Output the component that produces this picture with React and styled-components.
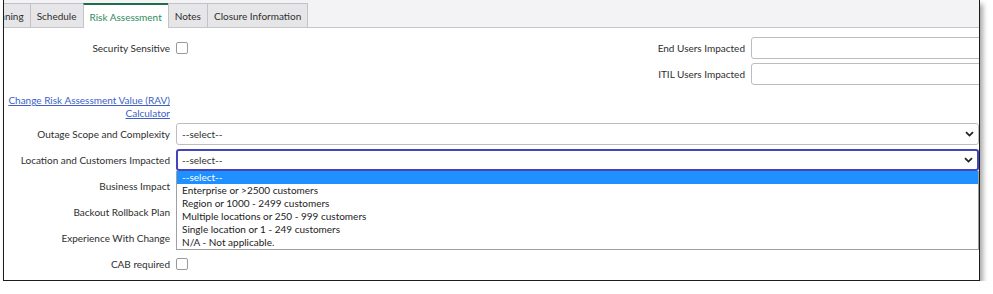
import React from 'react';
import styled, { createGlobalStyle } from 'styled-components';

const GlobalStyle = createGlobalStyle`
  html, body {
    margin: 0;
    padding: 0;
    background: #ffffff;
  }
  body {
    font-family: Lato, "Open Sans", "Liberation Sans", sans-serif;
    font-size: 10px;
    color: #2e2e2e;
  }
`

const Frame = styled.div`
  margin-left: 3px;
  width: 975px;
  height: 280px;
  border: 1px solid #1c1c1c;
  border-top: none;
  box-shadow: 3px 4px 5px rgba(0, 0, 0, 0.35);
  background: #ffffff;
  overflow: hidden;
  position: relative;
`

const TabStrip = styled.div`
  display: flex;
  align-items: flex-end;
  height: 27px;
  background: #f3f3f5;
  border-bottom: 1px solid #c6c6ca;
`

const TabList = styled.div`
  display: flex;
  margin-left: -25px;
  height: 24px;
`

const Tab = styled.div`
  display: flex;
  align-items: center;
  padding: 0 6px;
  height: 23px;
  border: 1px solid #c3c3c7;
  border-bottom: none;
  margin-right: -1px;
  background: ${p => (p.$active ? '#ffffff' : '#e6e6e8')};
  color: ${p => (p.$active ? '#2f8a5c' : '#2e2e2e')};
  border-top: ${p => (p.$active ? '2px solid #1e6e4c' : '1px solid #c3c3c7')};
  margin-bottom: ${p => (p.$active ? '-1px' : '0')};
  position: relative;
  white-space: nowrap;
`

const Form = styled.div`
  display: flex;
  flex-direction: column;
  gap: 4px;
  padding-top: 9px;
`

const Top = styled.div`
  display: flex;
`

const Half = styled.div`
  display: flex;
  flex-direction: column;
  gap: 4px;
  width: ${p => p.$width}px;
  flex-shrink: 0;
`

const Row = styled.div`
  display: flex;
  align-items: center;
  gap: 6px;
  height: 22px;
  position: relative;
`

const Label = styled.div`
  width: ${p => p.$width || 166}px;
  flex-shrink: 0;
  text-align: right;
  white-space: nowrap;
`

const LinkLabel = styled.a`
  display: block;
  width: 166px;
  text-align: right;
  color: #3d5fc6;
  text-decoration: underline;
  line-height: 13px;
  padding-top: 5px;
  height: 30px;
  box-sizing: border-box;
  white-space: nowrap;
  cursor: pointer;
`

const Checkbox = styled.span`
  display: inline-block;
  width: 10px;
  height: 10px;
  border: 1px solid #9a9a9e;
  border-radius: 2px;
  background: #ffffff;
`

const TextInput = styled.div`
  width: 260px;
  height: 20px;
  border: 1px solid #bdbdc1;
  border-radius: 3px;
  background: #ffffff;
  flex-shrink: 0;
`

const SelectBox = styled.div`
  flex: 1;
  display: flex;
  align-items: center;
  justify-content: space-between;
  height: ${p => (p.$focused ? '18px' : '20px')};
  border: ${p => (p.$focused ? '2px solid #4444be' : '1px solid #bdbdc1')};
  border-radius: 3px;
  padding: 0 4px 0 ${p => (p.$focused ? '4px' : '5px')};
  background: #ffffff;
  color: #2e2e2e;
`

const Dropdown = styled.div`
  position: absolute;
  left: 172px;
  right: 0;
  top: 22px;
  border: 1px solid #a0a0a4;
  border-top: none;
  background: #ffffff;
  z-index: 2;
`

const Option = styled.div`
  height: 13px;
  line-height: 13px;
  padding-left: 5px;
  background: ${p => (p.$selected ? '#1e90ff' : 'transparent')};
  color: ${p => (p.$selected ? '#ffffff' : '#222222')};
  white-space: nowrap;
`

const Chevron = () => (
  <svg width="9" height="6" viewBox="0 0 9 6">
    <path d="M1 1.2 L4.5 4.6 L8 1.2" fill="none" stroke="#222" strokeWidth="1.8" />
  </svg>
)

const tabs = ['Planning', 'Schedule', 'Risk Assessment', 'Notes', 'Closure Information'];

const locationOptions = [
  '--select--',
  'Enterprise or >2500 customers',
  'Region or 1000 - 2499 customers',
  'Multiple locations or 250 - 999 customers',
  'Single location or 1 - 249 customers',
  'N/A - Not applicable.',
];

export default function App() {
  return (
    <>
      <GlobalStyle />
      <Frame>
        <TabStrip>
          <TabList>
            {tabs.map(t => (
              <Tab key={t} $active={t === 'Risk Assessment'}>{t}</Tab>
            ))}
          </TabList>
        </TabStrip>
        <Form>
          <Top>
            <Half $width={487}>
              <Row>
                <Label>Security Sensitive</Label>
                <Checkbox />
              </Row>
            </Half>
            <Half $width={500}>
              <Row>
                <Label $width={254}>End Users Impacted</Label>
                <TextInput />
              </Row>
              <Row>
                <Label $width={254}>ITIL Users Impacted</Label>
                <TextInput />
              </Row>
            </Half>
          </Top>
          <LinkLabel>
            Change Risk Assessment Value (RAV)
            <br />
            Calculator
          </LinkLabel>
          <Row>
            <Label>Outage Scope and Complexity</Label>
            <SelectBox>--select--<Chevron /></SelectBox>
          </Row>
          <Row>
            <Label>Location and Customers Impacted</Label>
            <SelectBox $focused>--select--<Chevron /></SelectBox>
            <Dropdown>
              {locationOptions.map((o, i) => (
                <Option key={o} $selected={i === 0}>{o}</Option>
              ))}
            </Dropdown>
          </Row>
          <Row>
            <Label>Business Impact</Label>
          </Row>
          <Row>
            <Label>Backout Rollback Plan</Label>
          </Row>
          <Row>
            <Label>Experience With Change</Label>
          </Row>
          <Row>
            <Label>CAB required</Label>
            <Checkbox />
          </Row>
        </Form>
      </Frame>
    </>
  );
}
